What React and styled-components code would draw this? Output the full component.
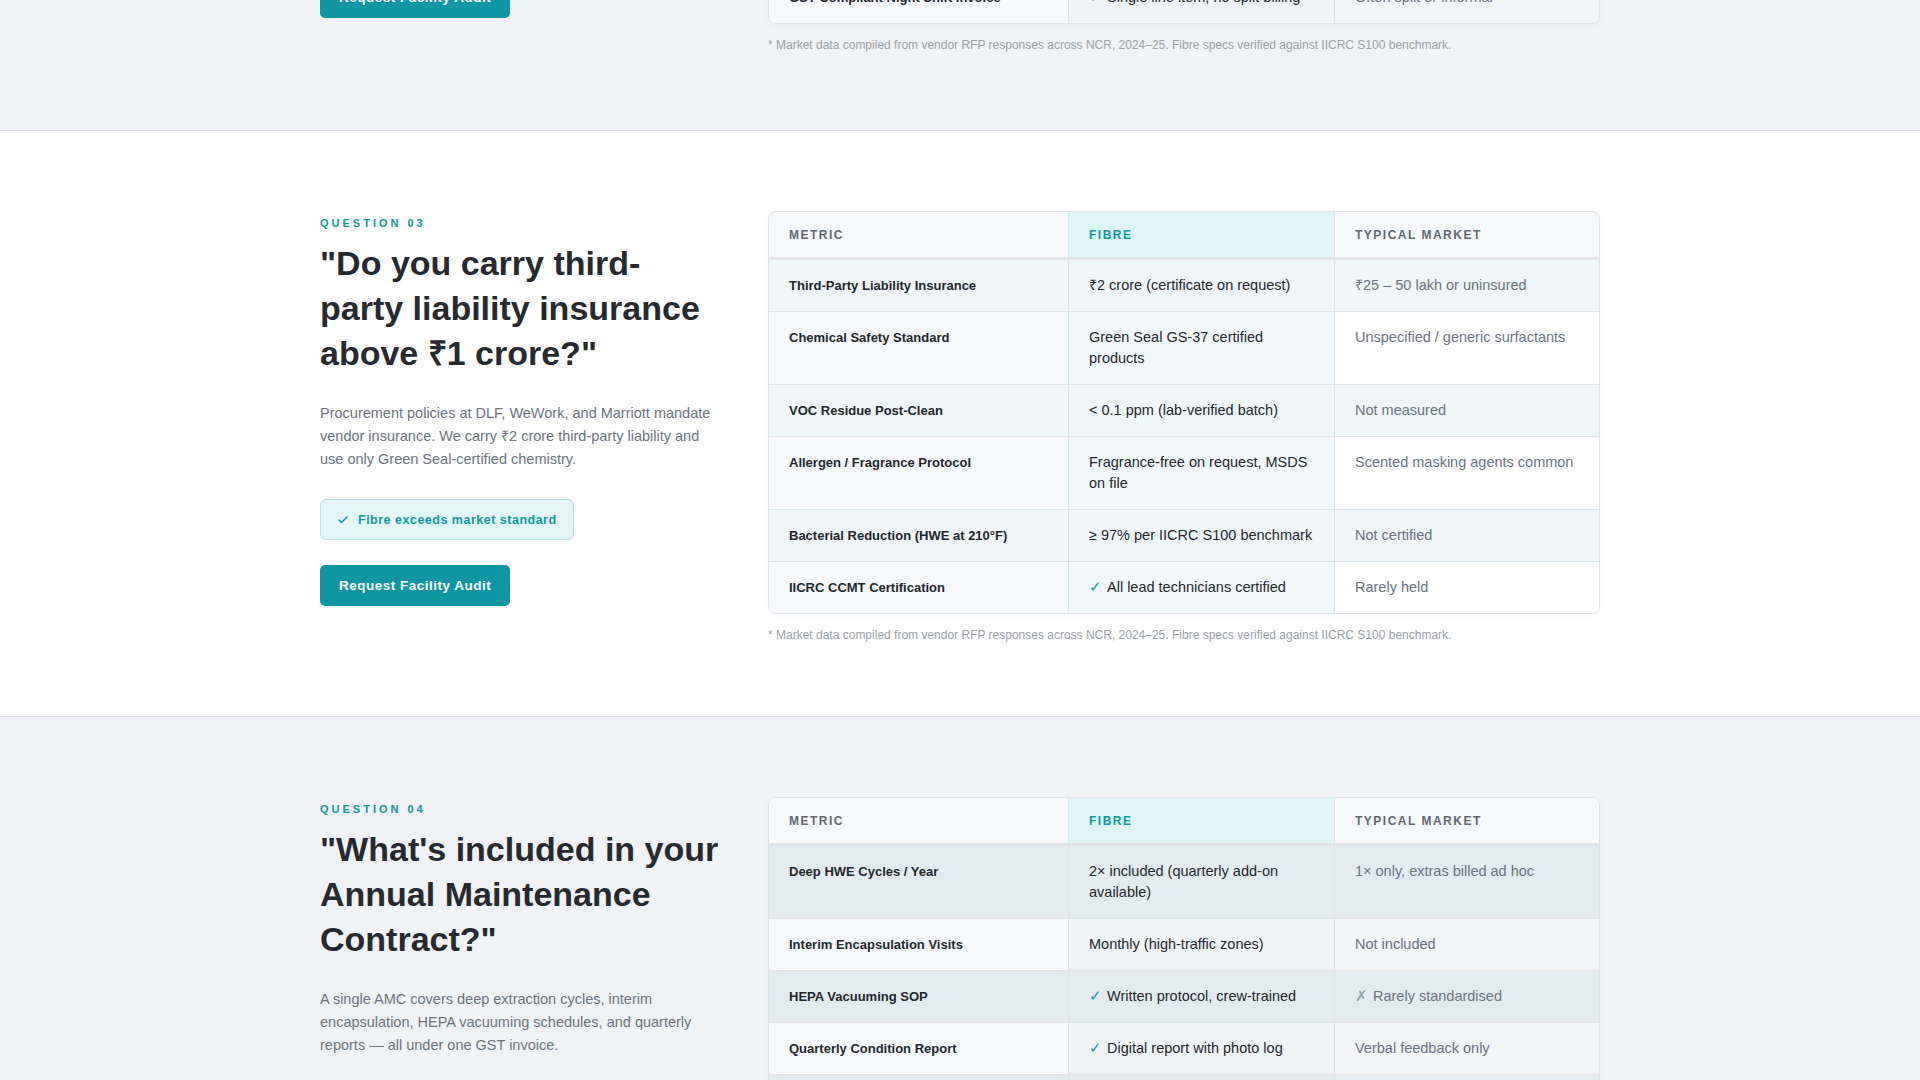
import React from "react";
import styled, { createGlobalStyle } from "styled-components";

const Global = createGlobalStyle`
  html, body { margin: 0; padding: 0; }
  body { font-family: "Liberation Sans", Arial, sans-serif; background: #f0f2f5; }
`;

const TEAL = "#0e97a2";

const Section = styled.section`
  background: ${(p) => (p.$alt ? "#f0f2f5" : "#ffffff")};
  border-bottom: 1px solid #dde1e6;
  padding: ${(p) => p.$pad || "80px 0 74px"};
  overflow: hidden;
`;

const Inner = styled.div`
  width: 1280px;
  margin: 0 auto;
  display: grid;
  grid-template-columns: 400px 832px;
  column-gap: 48px;
  margin-top: ${(p) => p.$shift || 0}px;
`;

const Left = styled.div`
  display: flex;
  flex-direction: column;
  align-items: flex-start;
  padding-top: 6px;
`;

const Label = styled.div`
  font-size: 11px;
  font-weight: 700;
  letter-spacing: 3px;
  color: ${TEAL};
`;

const Title = styled.h2`
  margin: 12px 0 0;
  font-size: 34px;
  line-height: 45px;
  font-weight: 700;
  color: #262a30;
`;

const Para = styled.p`
  margin: 26px 0 0;
  font-size: 14.5px;
  line-height: 23px;
  color: #6b7280;
`;

const Badge = styled.div`
  margin-top: 28px;
  display: inline-flex;
  align-items: center;
  gap: 9px;
  height: 41px;
  padding: 0 16px;
  box-sizing: border-box;
  background: #e2f6f8;
  border: 1px solid #b7e3e8;
  border-radius: 6px;
  color: ${TEAL};
  font-size: 12.5px;
  font-weight: 700;
  letter-spacing: 0.5px;
`;

const Button = styled.button`
  margin-top: ${(p) => (p.$mt != null ? p.$mt : 25)}px;
  height: 41px;
  padding: 0 19px;
  border: none;
  border-radius: 5px;
  background: ${TEAL};
  color: #fff;
  font-family: inherit;
  font-size: 13.5px;
  font-weight: 700;
  letter-spacing: 0.5px;
`;

const Right = styled.div`
  display: flex;
  flex-direction: column;
`;

const Table = styled.div`
  border: 1px solid #dfe3e8;
  border-radius: 8px;
  overflow: hidden;
  background: #fff;
  box-shadow: 0 2px 6px rgba(0, 0, 0, 0.03);
`;

const Row = styled.div`
  display: grid;
  grid-template-columns: 299px 266px 1fr;
  border-top: ${(p) => (p.$head ? "none" : "1px solid #dde3e8")};
  ${(p) => p.$head && "border-bottom: 2px solid #dfe3e8;"}
`;

const rowBg = (p) => {
  const t = p.$theme;
  if (p.$head) return p.$col === 1 ? "#def5f7" : "#f7f8fa";
  if (t === "gray") {
    if (p.$odd) return "#e2ecf0";
    return ["#f7f8fa", "#eef3f6", "#f2f4f6"][p.$col];
  }
  if (p.$odd) return "#eef6f8";
  return ["#f7f8fa", "#f1f8fa", "#ffffff"][p.$col];
};

const Cell = styled.div`
  background: ${rowBg};
  padding: ${(p) => (p.$head ? "16px 20px 14px" : "15px 20px 15px")};
  border-left: ${(p) => (p.$col === 0 ? "none" : "1px solid #dde3e8")};
  font-size: ${(p) => (p.$head ? "12px" : p.$col === 0 ? "13px" : "14.5px")};
  font-weight: ${(p) => (p.$head || p.$col === 0 ? 700 : 400)};
  letter-spacing: ${(p) => (p.$head ? "1.5px" : "0")};
  line-height: ${(p) => (p.$head ? "15px" : "21px")};
  color: ${(p) =>
    p.$head ? (p.$col === 1 ? TEAL : "#5e6875") : p.$col === 2 ? "#6b7280" : "#23272d"};
`;

const Check = styled.span`
  color: ${TEAL};
  margin-right: 5px;
`;

const Cross = styled.span`
  color: #9aa1aa;
  margin-right: 5px;
`;

const Note = styled.div`
  margin-top: 14px;
  font-size: 12px;
  color: #9aa0a8;
`;

const CheckIcon = () => (
  <svg width="12" height="12" viewBox="0 0 24 24" fill="none" stroke={TEAL} strokeWidth="3" strokeLinecap="round" strokeLinejoin="round">
    <polyline points="20 6 9 17 4 12" />
  </svg>
);

const renderVal = (v) => {
  if (v.startsWith("✓ ")) return (<><Check>✓</Check>{v.slice(2)}</>);
  if (v.startsWith("✗ ")) return (<><Cross>✗</Cross>{v.slice(2)}</>);
  return v;
};

const Compare = ({ rows, theme }) => (
  <Table>
    <Row $head>
      {["METRIC", "FIBRE", "TYPICAL MARKET"].map((h, i) => (
        <Cell key={h} $head $col={i}>{h}</Cell>
      ))}
    </Row>
    {rows.map((r, ri) => (
      <Row key={ri}>
        {r.map((c, ci) => (
          <Cell key={ci} $col={ci} $odd={ri % 2 === 0} $theme={theme}>{renderVal(c)}</Cell>
        ))}
      </Row>
    ))}
  </Table>
);

const NOTE = "* Market data compiled from vendor RFP responses across NCR, 2024–25. Fibre specs verified against IICRC S100 benchmark.";

const q3 = [
  ["Third-Party Liability Insurance", "₹2 crore (certificate on request)", "₹25 – 50 lakh or uninsured"],
  ["Chemical Safety Standard", "Green Seal GS-37 certified products", "Unspecified / generic surfactants"],
  ["VOC Residue Post-Clean", "< 0.1 ppm (lab-verified batch)", "Not measured"],
  ["Allergen / Fragrance Protocol", "Fragrance-free on request, MSDS on file", "Scented masking agents common"],
  ["Bacterial Reduction (HWE at 210°F)", "≥ 97% per IICRC S100 benchmark", "Not certified"],
  ["IICRC CCMT Certification", "✓ All lead technicians certified", "Rarely held"],
];

const q4 = [
  ["Deep HWE Cycles / Year", "2× included (quarterly add-on available)", "1× only, extras billed ad hoc"],
  ["Interim Encapsulation Visits", "Monthly (high-traffic zones)", "Not included"],
  ["HEPA Vacuuming SOP", "✓ Written protocol, crew-trained", "✗ Rarely standardised"],
  ["Quarterly Condition Report", "✓ Digital report with photo log", "Verbal feedback only"],
  ["Invoice Format", "✓ Single GST invoice", "Multiple invoices"],
];

const TailTable = styled(Table)`
  border-top: none;
  border-radius: 0 0 8px 8px;
`;

export default function App() {
  return (
    <>
      <Global />
      <Section $alt $pad="0 0 78px">
        <Inner $shift={-29}>
          <Left>
            <Button $mt={0}>Request Facility Audit</Button>
          </Left>
          <Right>
            <TailTable>
              <Row>
                <Cell $col={0} $theme="gray">GST-Compliant Night Shift Invoice</Cell>
                <Cell $col={1} $theme="gray">{renderVal("✓ Single line item, no split billing")}</Cell>
                <Cell $col={2} $theme="gray">Often split or informal</Cell>
              </Row>
            </TailTable>
            <Note>{NOTE}</Note>
          </Right>
        </Inner>
      </Section>

      <Section>
        <Inner>
          <Left>
            <Label>QUESTION 03</Label>
            <Title>"Do you carry third-party liability insurance above ₹1 crore?"</Title>
            <Para>Procurement policies at DLF, WeWork, and Marriott mandate vendor insurance. We carry ₹2 crore third-party liability and use only Green Seal-certified chemistry.</Para>
            <Badge><CheckIcon />Fibre exceeds market standard</Badge>
            <Button>Request Facility Audit</Button>
          </Left>
          <Right>
            <Compare rows={q3} theme="white" />
            <Note>{NOTE}</Note>
          </Right>
        </Inner>
      </Section>

      <Section $alt>
        <Inner>
          <Left>
            <Label>QUESTION 04</Label>
            <Title>"What's included in your Annual Maintenance Contract?"</Title>
            <Para>A single AMC covers deep extraction cycles, interim encapsulation, HEPA vacuuming schedules, and quarterly reports — all under one GST invoice.</Para>
            <Badge><CheckIcon />Fibre exceeds market standard</Badge>
            <Button>Request Facility Audit</Button>
          </Left>
          <Right>
            <Compare rows={q4} theme="gray" />
            <Note>{NOTE}</Note>
          </Right>
        </Inner>
      </Section>
    </>
  );
}
